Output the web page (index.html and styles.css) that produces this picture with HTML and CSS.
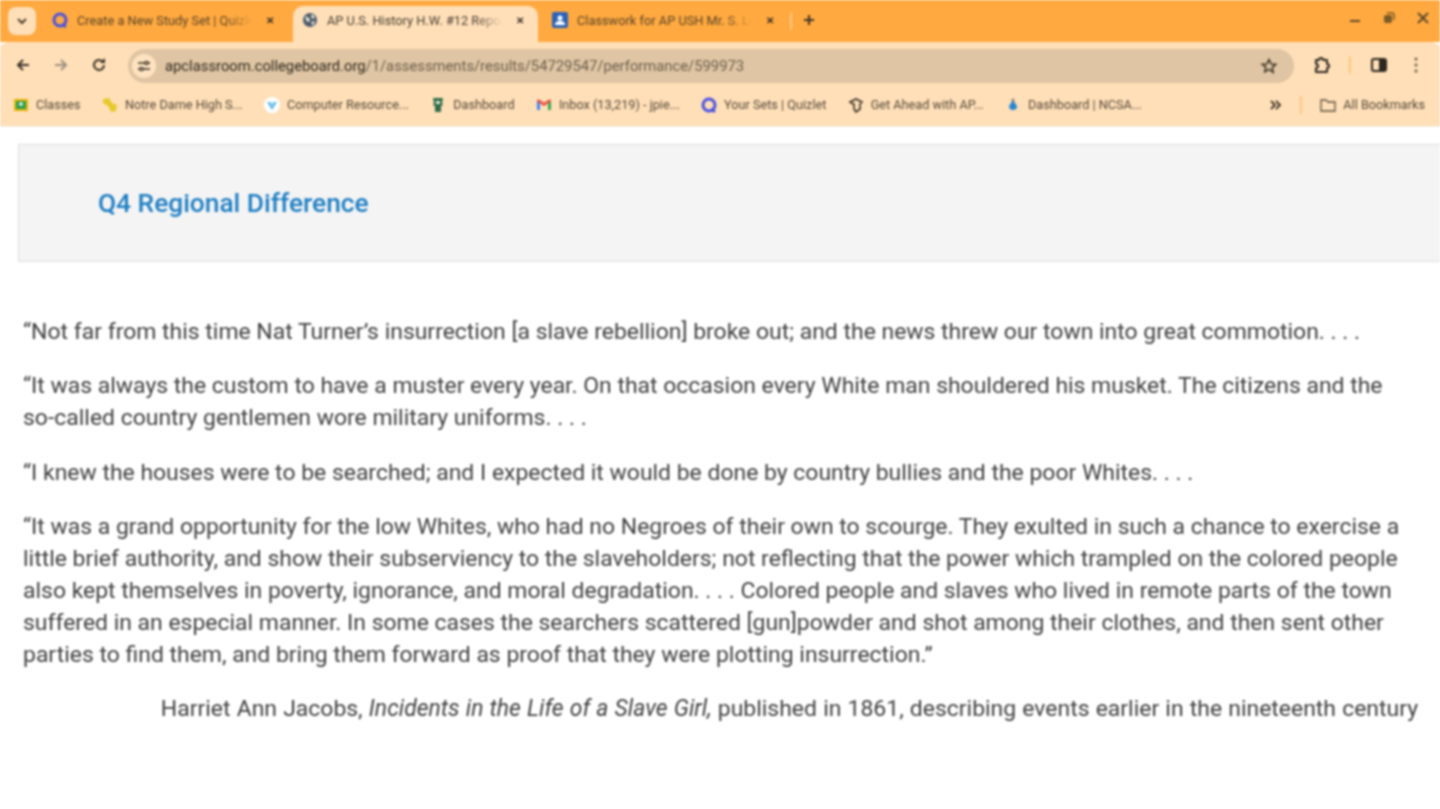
FILE: index.html
```html
<!DOCTYPE html>
<html lang="en">
<head>
    <meta charset="UTF-8">
    <title>AP U.S. History H.W. #12 Report</title>
    <link rel="stylesheet" href="styles.css">
</head>
<body>
    <div class="browser">
        <div class="tabstrip">
            <button class="tab-search">
                <svg width="12" height="12" viewBox="0 0 12 12"><path d="M2 4l4 4 4-4" fill="none" stroke="#4a3f30" stroke-width="2"/></svg>
            </button>
            <div class="tab">
                <svg class="favicon" viewBox="0 0 16 16"><circle cx="8" cy="8" r="6" fill="none" stroke="#4a52e0" stroke-width="3"/><path d="M10 12l4 3" stroke="#4a52e0" stroke-width="2.5"/></svg>
                <span class="tab-title">Create a New Study Set | Quizlet</span>
                <span class="tab-close">&#10005;</span>
            </div>
            <div class="tab active">
                <svg class="favicon" viewBox="0 0 16 16"><circle cx="8" cy="8" r="7" fill="#4d5a68"/><path d="M3 4l4 2 1 3-3 1zM10 2l3 3-2 2-2-2zM9 10l4-1-2 5z" fill="#e8e4dc"/></svg>
                <span class="tab-title">AP U.S. History H.W. #12 Report</span>
                <span class="tab-close">&#10005;</span>
            </div>
            <div class="tab">
                <svg class="favicon" viewBox="0 0 16 16"><rect x="0" y="0" width="16" height="16" rx="2" fill="#2b62b8"/><circle cx="8" cy="6" r="2.5" fill="#fff"/><path d="M3 13c0-3 2-4 5-4s5 1 5 4z" fill="#fff"/></svg>
                <span class="tab-title">Classwork for AP USH Mr. S. Lee</span>
                <span class="tab-close">&#10005;</span>
            </div>
            <span class="tab-sep"></span>
            <svg class="new-tab" width="12" height="12" viewBox="0 0 12 12"><path d="M6 1v10M1 6h10" stroke="#3f3526" stroke-width="2"/></svg>
            <div class="window-controls">
                <svg width="14" height="14" viewBox="0 0 14 14"><path d="M2 10h10" stroke="#5c4a2c" stroke-width="2"/></svg>
                <svg width="14" height="14" viewBox="0 0 14 14"><rect x="2" y="4" width="8" height="8" rx="2" fill="#7a5a26"/><path d="M5 2h5a2 2 0 0 1 2 2v5" fill="none" stroke="#7a5a26" stroke-width="1.5"/></svg>
                <svg width="14" height="14" viewBox="0 0 14 14"><path d="M2 2l10 10M12 2L2 12" stroke="#5c4a2c" stroke-width="2"/></svg>
            </div>
        </div>

        <div class="toolbar">
            <div class="nav-buttons">
                <svg width="16" height="16" viewBox="0 0 16 16"><path d="M14 8H4M8 3L3 8l5 5" fill="none" stroke="#3a3226" stroke-width="2"/></svg>
                <svg width="16" height="16" viewBox="0 0 16 16"><path d="M2 8h10M8 3l5 5-5 5" fill="none" stroke="#9c9080" stroke-width="2"/></svg>
                <svg width="16" height="16" viewBox="0 0 16 16"><path d="M13 8a5 5 0 1 1-1.6-3.7" fill="none" stroke="#3a3226" stroke-width="2"/><path d="M14 1v5H9z" fill="#3a3226"/></svg>
            </div>
            <div class="omnibox">
                <span class="site-info">
                    <svg width="14" height="14" viewBox="0 0 14 14"><path d="M1 4h7M11 4h2M1 10h2M6 10h7" stroke="#3a3226" stroke-width="1.5"/><circle cx="9.5" cy="4" r="1.6" fill="none" stroke="#3a3226" stroke-width="1.4"/><circle cx="4.5" cy="10" r="1.6" fill="none" stroke="#3a3226" stroke-width="1.4"/></svg>
                </span>
                <span class="url"><span class="url-host">apclassroom.collegeboard.org</span>/1/assessments/results/54729547/performance/599973</span>
                <svg class="star" width="18" height="18" viewBox="0 0 18 18"><path d="M9 2.500l2 4.400 4.800.5-3.600 3.200 1 4.700L9 12.400l-4.200 2.400 1-4.700L2.200 7.400 7 6.900z" fill="none" stroke="#3a3226" stroke-width="1.500"/></svg>
            </div>
            <div class="toolbar-actions">
                <svg width="20" height="20" viewBox="0 0 20 20"><path d="M4 5h3a2 2 0 0 1 4 0h4v4a2 2 0 0 1 0 4v4H4v-4a2 2 0 0 0 0-4z" fill="none" stroke="#2e2820" stroke-width="2" stroke-linejoin="round"/></svg>
                <span class="toolbar-sep"></span>
                <svg width="18" height="18" viewBox="0 0 18 18"><rect x="2" y="3" width="14" height="12" rx="2" fill="none" stroke="#2e2820" stroke-width="2"/><rect x="9" y="3" width="7" height="12" fill="#2e2820"/></svg>
                <svg class="menu-dots" width="4" height="16" viewBox="0 0 4 16"><circle cx="2" cy="2" r="1.500" fill="#6a5e4c"/><circle cx="2" cy="8" r="1.500" fill="#6a5e4c"/><circle cx="2" cy="14" r="1.500" fill="#6a5e4c"/></svg>
            </div>
        </div>

        <div class="bookmarks">
            <div class="bookmark">
                <svg class="favicon" viewBox="0 0 16 16"><rect x="1" y="2" width="14" height="12" fill="#e8b400"/><rect x="3" y="4" width="10" height="8" fill="#2f9e4f"/><circle cx="8" cy="7" r="1.800" fill="#fff"/></svg>
                <span>Classes</span>
            </div>
            <div class="bookmark">
                <svg class="favicon" viewBox="0 0 16 16"><path d="M1 2l6-1 3 5 5 2-1 6-5 1-3-6-5-3z" fill="#e6c92c"/></svg>
                <span>Notre Dame High S...</span>
            </div>
            <div class="bookmark">
                <svg class="favicon" viewBox="0 0 16 16"><circle cx="8" cy="8" r="8" fill="#fff"/><path d="M3 5h10l-5 8z" fill="#5db8e8"/><path d="M6 5h4L8 9z" fill="#bfe4f5"/></svg>
                <span>Computer Resource...</span>
            </div>
            <div class="bookmark">
                <svg class="favicon" viewBox="0 0 16 16"><path d="M3 1h10l-1 5 1 2-2 1v6H5V9L3 8l1-2z" fill="#2f6b47"/><rect x="6" y="4" width="4" height="3" fill="#dfe8d8"/></svg>
                <span>Dashboard</span>
            </div>
            <div class="bookmark">
                <svg class="favicon" viewBox="0 0 16 16"><path d="M1 13V4l3 2v7z" fill="#4285f4"/><path d="M15 13V4l-3 2v7z" fill="#34a853"/><path d="M1 4l7 5 7-5v-1l-2-.500L8 6 3 2.500 1 3z" fill="#ea4335"/></svg>
                <span>Inbox (13,219) - jpie...</span>
            </div>
            <div class="bookmark">
                <svg class="favicon" viewBox="0 0 16 16"><circle cx="8" cy="8" r="6" fill="none" stroke="#4a52e0" stroke-width="3"/><path d="M10 12l4 3" stroke="#4a52e0" stroke-width="2.500"/></svg>
                <span>Your Sets | Quizlet</span>
            </div>
            <div class="bookmark">
                <svg class="favicon" viewBox="0 0 16 16"><path d="M2 5l6-3 6 3-2 2v5l-4 3-2-3V7H5z" fill="none" stroke="#3a3226" stroke-width="1.600"/></svg>
                <span>Get Ahead with AP...</span>
            </div>
            <div class="bookmark">
                <svg class="favicon" viewBox="0 0 16 16"><path d="M8 3l4 6a4 4 0 1 1-8 0z" fill="#2b86d0"/><path d="M8 1l1.500 3h-3z" fill="#6a5e4c"/></svg>
                <span>Dashboard | NCSA...</span>
            </div>
            <div class="bookmarks-end">
                <svg width="12" height="10" viewBox="0 0 12 10"><path d="M1 1l4 4-4 4M6 1l4 4-4 4" fill="none" stroke="#3a3226" stroke-width="1.800"/></svg>
                <span class="toolbar-sep"></span>
                <div class="bookmark all">
                    <svg class="favicon" viewBox="0 0 16 16"><path d="M1 3h5l2 2h7v9H1z" fill="none" stroke="#5e5240" stroke-width="1.300"/></svg>
                    <span>All Bookmarks</span>
                </div>
            </div>
        </div>
    </div>

    <div class="page">
        <div class="question-head">
            <h2>Q4 Regional Difference</h2>
        </div>
        <div class="passage">
            <p>“Not far from this time Nat Turner’s insurrection [a slave rebellion] broke out; and the news threw our town into great commotion. . . .</p>
            <p>“It was always the custom to have a muster every year. On that occasion every White man shouldered his musket. The citizens and the <span class="nowrap">so-called</span> country gentlemen wore military uniforms. . . .</p>
            <p>“I knew the houses were to be searched; and I expected it would be done by country bullies and the poor Whites. . . .</p>
            <p>“It was a grand opportunity for the low Whites, who had no Negroes of their own to scourge. They exulted in such a chance to exercise a little brief authority, and show their subserviency to the slaveholders; not reflecting that the power which trampled on the colored people also kept themselves in poverty, ignorance, and moral degradation. . . . Colored people and slaves who lived in remote parts of the town suffered in an especial manner. In some cases the searchers scattered [gun]powder and shot among their clothes, and then sent other parties to find them, and bring them forward as proof that they were plotting insurrection.”</p>
            <p class="source">Harriet Ann Jacobs, <em>Incidents in the Life of a Slave Girl,</em> published in 1861, describing events earlier in the nineteenth century</p>
        </div>
    </div>
</body>
</html>
```

FILE: styles.css
```css
html {
    height: 100%;
    overflow: hidden;
    background: white;
}
body {
    margin: 0;
    font-family: Roboto, "Liberation Sans", sans-serif;
    filter: blur(0.9px);
}
/* runs 4px past the window so the blur doesn't fade at the edges */
.browser {
    margin: -4px -4px 0;
}
.tabstrip {
    display: flex;
    align-items: flex-end;
    height: 46px;
    padding-left: 12px;
    box-sizing: border-box;
    background: #ffa940;
    color: #5a4526;
}
.tab-search {
    width: 28px;
    height: 28px;
    margin-bottom: 7px;
    padding: 0;
    border: none;
    border-radius: 8px;
    background: #ffdfb8;
    display: flex;
    align-items: center;
    justify-content: center;
}
.tab {
    display: flex;
    align-items: center;
    width: 245px;
    height: 36px;
    padding: 0 10px 8px 0;
    box-sizing: border-box;
    border-radius: 10px 10px 0 0;
    font-size: 12.8px;
    margin-left: 5px;
}
.tab:first-of-type {
    margin-left: 7px;
}
.tab .favicon {
    margin: 0 9px;
}
.tab.active {
    background: #ffdfb8;
    color: #4a4134;
}
.tab-title {
    flex: 1;
    overflow: hidden;
    white-space: nowrap;
    -webkit-mask-image: linear-gradient(to right, black 85%, transparent);
    mask-image: linear-gradient(to right, black 85%, transparent);
}
.tab-close {
    width: 16px;
    margin-left: 10px;
    text-align: center;
    font-size: 10px;
    font-weight: bold;
    color: #2e2820;
}
.tab-sep {
    width: 2px;
    height: 18px;
    margin: 0 11px 12px 2px;
    background: #ffc67d;
}
.new-tab {
    margin-bottom: 16px;
}
.window-controls {
    display: flex;
    gap: 20px;
    margin-left: auto;
    padding: 0 14px 17px 0;
}
.favicon {
    width: 16px;
    height: 16px;
    flex-shrink: 0;
}
.toolbar {
    display: flex;
    align-items: center;
    height: 46px;
    background: #ffdfb8;
    border-radius: 14px 14px 0 0;
}
.nav-buttons {
    display: flex;
    gap: 22px;
    width: 132px;
    padding-left: 19px;
    box-sizing: border-box;
}
.omnibox {
    display: flex;
    align-items: center;
    width: 1166px;
    height: 34px;
    margin-top: 2px;
    border-radius: 17px;
    background: #dfc5a3;
    box-sizing: border-box;
    padding: 0 16px 0 4px;
}
.site-info {
    width: 24px;
    height: 24px;
    border-radius: 50%;
    background: #ffe3c0;
    display: flex;
    align-items: center;
    justify-content: center;
}
.url {
    margin-left: 9px;
    font-size: 14.8px;
    color: #6b5f4e;
    white-space: nowrap;
}
.url-host {
    color: #2e2820;
}
.star {
    margin-left: auto;
}
.toolbar-actions {
    display: flex;
    align-items: center;
    flex: 1;
    padding-left: 18px;
}
.toolbar-sep {
    width: 2px;
    height: 18px;
    background: #ffc67d;
}
.toolbar-actions .toolbar-sep {
    margin: 0 19px 0 17px;
}
.menu-dots {
    margin-left: 26px;
}
.bookmarks {
    display: flex;
    align-items: center;
    gap: 21.3px;
    height: 39px;
    padding: 0 0 5px 17px;
    box-sizing: border-box;
    background: #ffdfb8;
    border-bottom: 1px solid #f0ece6;
    font-size: 12.7px;
    color: #54493a;
}
.bookmark {
    display: flex;
    align-items: center;
    gap: 7px;
    white-space: nowrap;
}
.bookmarks-end {
    display: flex;
    align-items: center;
    margin-left: auto;
    padding-right: 19px;
}
.bookmarks-end .toolbar-sep {
    margin: 0 18px;
}
.page {
    padding-top: 17px;
}
.question-head {
    display: flex;
    align-items: center;
    height: 118px;
    margin: 0 -4px 0 18px;
    padding-left: 79px;
    box-sizing: border-box;
    background: #f4f4f4;
    border: 1px solid #dddddd;
    border-right: none;
}
.question-head h2 {
    margin: 0;
    font-size: 26.3px;
    font-weight: 500;
    color: #1f7fc4;
}
.passage {
    padding: 54px 22px 0 23px;
    font-size: 22.95px;
    line-height: 32px;
    color: #404040;
}
.passage p {
    margin: 0 0 22.3px;
}
.nowrap {
    white-space: nowrap;
}
.source {
    text-align: right;
    word-spacing: 0.5px;
}
```
